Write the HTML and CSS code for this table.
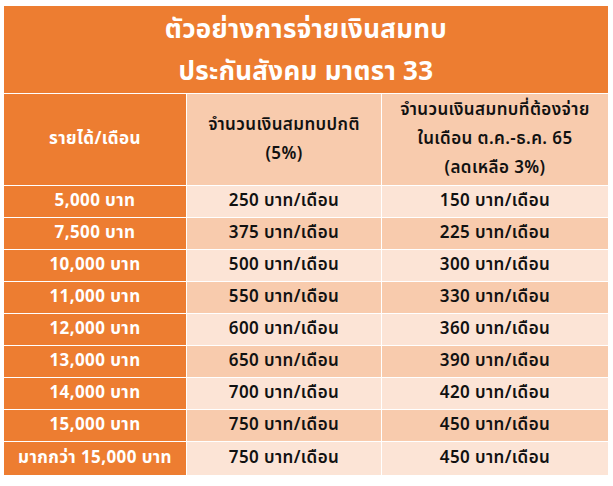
FILE: index.html
```html
<!DOCTYPE html>
<html lang="th">
<head>
<meta charset="utf-8">
<link rel="stylesheet" href="styles.css">
</head>
<body>
<div class="sheet">
  <div class="title">
    <div>ตัวอย่างการจ่ายเงินสมทบ</div>
    <div>ประกันสังคม มาตรา 33</div>
  </div>
  <div class="grid">
    <div class="c1 head">รายได้/เดือน</div>
    <div class="c dark head">จำนวนเงินสมทบปกติ<br>(5%)</div>
    <div class="c dark head">จำนวนเงินสมทบที่ต้องจ่าย<br>ในเดือน ต.ค.-ธ.ค. 65<br>(ลดเหลือ 3%)</div>

    <div class="c1">5,000 บาท</div><div class="c light">250 บาท/เดือน</div><div class="c light">150 บาท/เดือน</div>
    <div class="c1">7,500 บาท</div><div class="c dark">375 บาท/เดือน</div><div class="c dark">225 บาท/เดือน</div>
    <div class="c1">10,000 บาท</div><div class="c light">500 บาท/เดือน</div><div class="c light">300 บาท/เดือน</div>
    <div class="c1">11,000 บาท</div><div class="c dark">550 บาท/เดือน</div><div class="c dark">330 บาท/เดือน</div>
    <div class="c1">12,000 บาท</div><div class="c light">600 บาท/เดือน</div><div class="c light">360 บาท/เดือน</div>
    <div class="c1">13,000 บาท</div><div class="c dark">650 บาท/เดือน</div><div class="c dark">390 บาท/เดือน</div>
    <div class="c1">14,000 บาท</div><div class="c light">700 บาท/เดือน</div><div class="c light">420 บาท/เดือน</div>
    <div class="c1">15,000 บาท</div><div class="c dark">750 บาท/เดือน</div><div class="c dark">450 บาท/เดือน</div>
    <div class="c1">มากกว่า 15,000 บาท</div><div class="c light">750 บาท/เดือน</div><div class="c light">450 บาท/เดือน</div>
  </div>
</div>
</body>
</html>
```
FILE: styles.css
```css
html, body {
  margin: 0;
  padding: 0;
  background: #ffffff;
}
body {
  font-family: "Noto Sans Thai", "Noto Sans", "DejaVu Sans", sans-serif;
}
.sheet {
  margin: 6px 0 0 4px;
  width: 604px;
  display: flex;
  flex-direction: column;
  gap: 1px;
}
.title {
  background: #ED7D31;
  color: #ffffff;
  height: 87px;
  display: flex;
  flex-direction: column;
  justify-content: center;
  align-items: center;
  font-size: 26px;
  font-weight: 700;
  line-height: 42px;
  letter-spacing: 0.3px;
  padding-top: 2px;
  box-sizing: border-box;
}
.grid {
  display: grid;
  grid-template-columns: 182px 194px 226px;
  grid-template-rows: 91px repeat(8, 31px) 33px;
  gap: 1px;
}
.grid > div {
  display: flex;
  align-items: center;
  justify-content: center;
  text-align: center;
  font-size: 17px;
  line-height: 31px;
  letter-spacing: 0.4px;
}
.grid > .head {
  line-height: 29px;
}
.c1 {
  background: #ED7D31;
  color: #ffffff;
  font-weight: 700;
}
.c {
  color: #111111;
  font-weight: 600;
}
.dark { background: #F8CBAD; }
.light { background: #FCE4D6; }
```
